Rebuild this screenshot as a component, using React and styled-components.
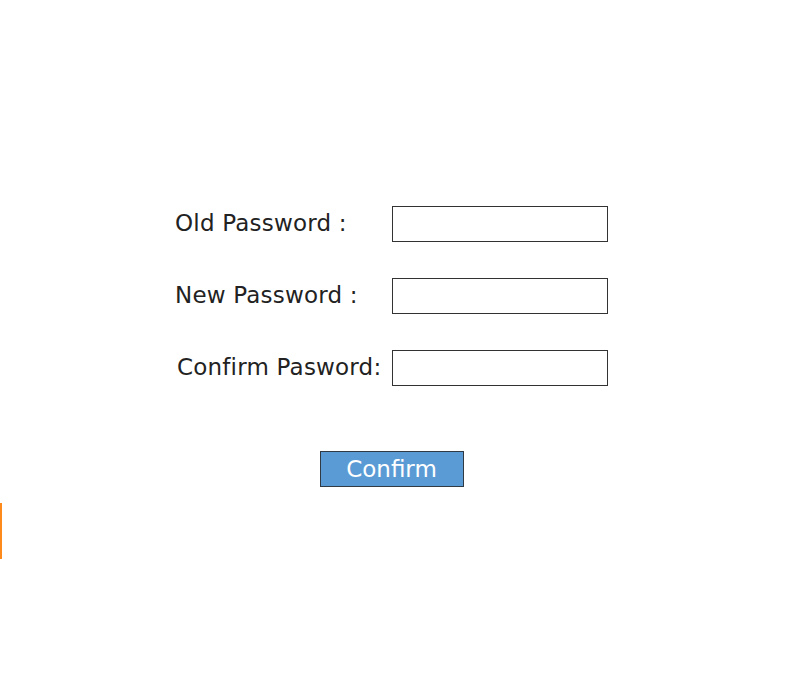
import React from 'react';
import styled, { createGlobalStyle } from 'styled-components';

const GlobalStyle = createGlobalStyle`
  body {
    margin: 0;
    background: #ffffff;
    font-family: "DejaVu Sans", "Liberation Sans", sans-serif;
  }
`;

const Page = styled.div`
  position: relative;
  min-height: 700px;
  display: flex;
  flex-direction: column;
  align-items: center;
  padding: 206px 2px 0 0;
  box-sizing: border-box;
`;

const Form = styled.form`
  display: flex;
  flex-direction: column;
  align-items: center;
`;

const Fields = styled.div`
  display: grid;
  grid-template-columns: 217px 216px;
  row-gap: 36px;
  align-items: center;
`;

const Label = styled.label`
  font-size: 23px;
  letter-spacing: 0.2px;
  color: #222222;
  padding-left: ${props => props.indent || 0}px;
  margin-top: -2px;
  white-space: nowrap;
`;

const Input = styled.input`
  width: 216px;
  height: 36px;
  box-sizing: border-box;
  border: 1px solid #333333;
  border-radius: 0;
  background: #ffffff;
  outline: none;
  padding: 0 6px;
`;

const Button = styled.button`
  margin-top: 65px;
  width: 144px;
  height: 36px;
  box-sizing: border-box;
  background: #5b9bd5;
  border: 1px solid #2f3a45;
  color: #ffffff;
  font-family: inherit;
  font-size: 23px;
  padding: 0;
  cursor: pointer;
`;

const EdgeMark = styled.span`
  position: absolute;
  left: 0;
  top: 503px;
  width: 2px;
  height: 56px;
  background: #ff8a1c;
`;

const fields = [
  { id: 'old', label: 'Old Password :' },
  { id: 'new', label: 'New Password :' },
  { id: 'confirm', label: 'Confirm Pasword:', indent: 2 }
];

export default function App() {
  return (
    <Page>
      <GlobalStyle />
      <Form onSubmit={e => e.preventDefault()}>
        <Fields>
          {fields.map(f => (
            <React.Fragment key={f.id}>
              <Label htmlFor={f.id} indent={f.indent}>
                {f.label}
              </Label>
              <Input id={f.id} type="password" />
            </React.Fragment>
          ))}
        </Fields>
        <Button type="submit">Confirm</Button>
      </Form>
      <EdgeMark />
    </Page>
  );
}
